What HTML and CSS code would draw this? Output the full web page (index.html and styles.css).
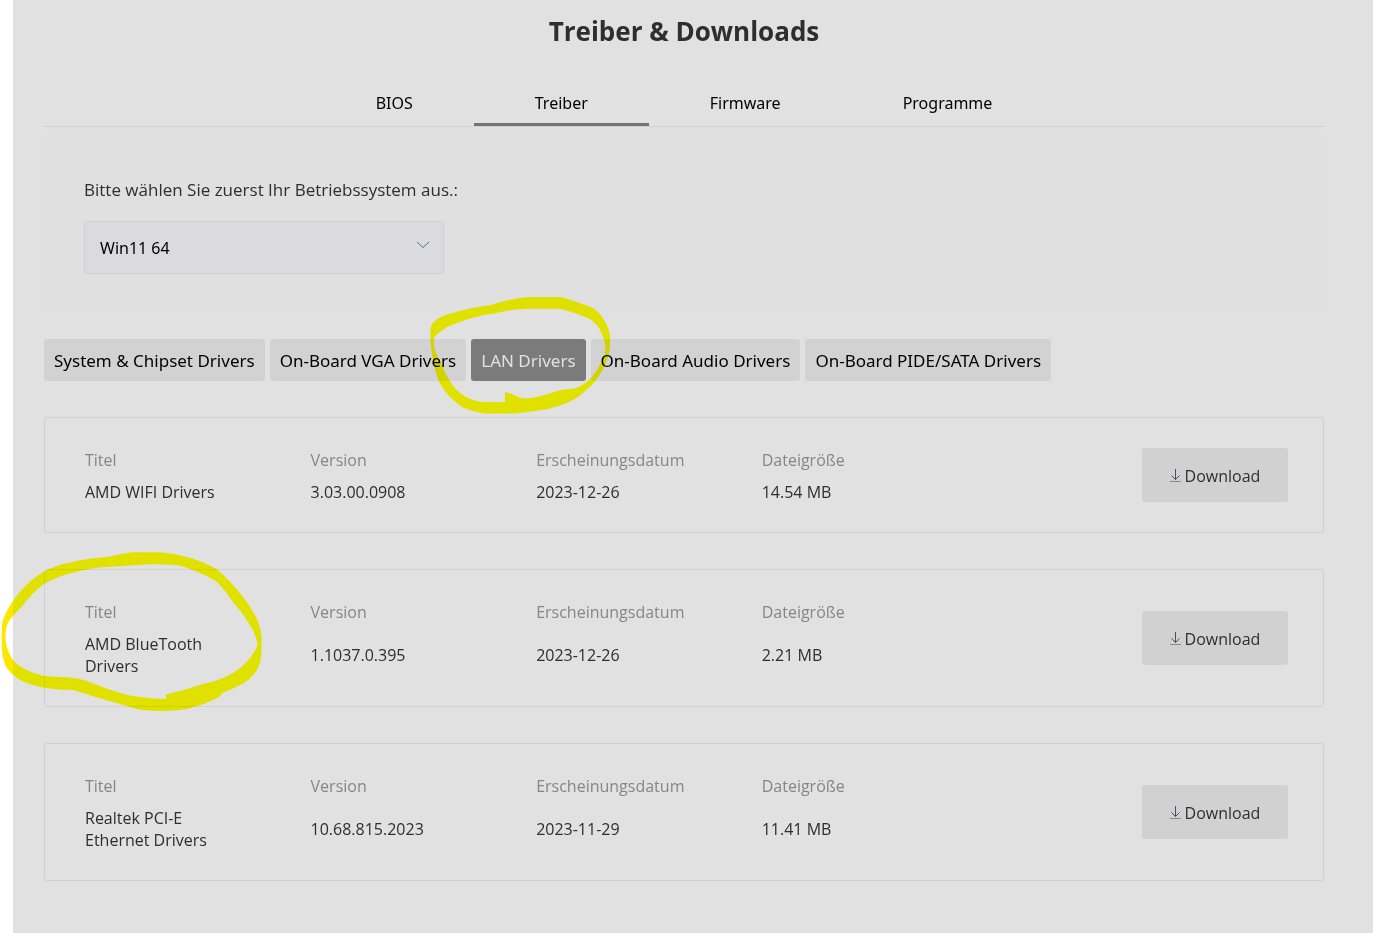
FILE: index.html
```html
<!DOCTYPE html>
<html lang="de">
	<head>
		<meta charset="UTF-8">
		<title>Treiber &amp; Downloads</title>
		<link rel="stylesheet" href="styles.css">
	</head>

	<body>
		<main class="page">
			<h1 class="title">Treiber &amp; Downloads</h1>

			<nav class="tabs">
				<a href="#bios">BIOS</a>
				<a href="#treiber" class="current">Treiber</a>
				<a href="#firmware">Firmware</a>
				<a href="#programme">Programme</a>
			</nav>

			<section class="os">
				<label for="os">Bitte wählen Sie zuerst Ihr Betriebssystem aus.:</label>
				<div class="select">
					<select id="os">
						<option>Win11 64</option>
					</select>
					<svg class="arrow" width="14" height="8" viewBox="0 0 14 8"><path d="M1 1l6 5.500 6-5.500" fill="none" stroke="#4f7090" stroke-width="1"/></svg>
				</div>
			</section>

			<div class="filter">
				<button type="button">System &amp; Chipset Drivers</button>
				<button type="button">On-Board VGA Drivers</button>
				<div class="marked">
					<button type="button" class="current">LAN Drivers</button>
					<svg class="ink ink-filter" width="192" height="126" viewBox="424 292 192 126">
						<path fill-rule="evenodd" d="M527 297H557Q562 297 567 299L590 307Q599 312 603 320Q608 328 609 336V345Q609 353 605 362Q602 371 595 380Q590 387 583 392Q577 398 570 401Q559 406 547 409Q530 412 513 413.500H483Q472 412 463 408Q456 404 450 398Q443 391 438 382Q435 374 433 365Q430 352 429.500 340V328Q431 322 438 318Q446 314 455 312Q472 307 490 305Q508 299 527 297Z
						M527 308.700H557Q562 309 567 311Q577 314 587 318Q594 322 598 328Q603 337 604.500 347Q605 353 602 359Q597 370 590 378Q582 386 572 389Q565 389 560 390L540 396Q532 398 524 398.500Q519 398 515 396Q509 393 504 392V402H480Q472 401 465 397Q458 393 453 387Q445 376 440 363Q435 354 433 347V338Q436 333 442 330Q447 326 453 324Q468 318 483 315Q492 314 500 312Q513 309 527 308.700Z"/>
					</svg>
				</div>
				<button type="button">On-Board Audio Drivers</button>
				<button type="button">On-Board PIDE/SATA Drivers</button>
			</div>

			<div class="list">
				<article class="card">
					<dl>
						<div><dt>Titel</dt><dd>AMD WIFI Drivers</dd></div>
						<div><dt>Version</dt><dd>3.03.00.0908</dd></div>
						<div><dt>Erscheinungsdatum</dt><dd>2023-12-26</dd></div>
						<div><dt>Dateigröße</dt><dd>14.54 MB</dd></div>
					</dl>
					<a class="download" href="#wifi"><svg width="11" height="13" viewBox="0 0 11 13"><path d="M5.500 0v10.500M1.500 6.500l4 4 4-4" fill="none" stroke="#554a58"/><path d="M0 12.500h11" stroke="#8c8c8c"/></svg>Download</a>
				</article>

				<article class="card">
					<dl>
						<div><dt>Titel</dt><dd>AMD BlueTooth Drivers</dd></div>
						<div><dt>Version</dt><dd>1.1037.0.395</dd></div>
						<div><dt>Erscheinungsdatum</dt><dd>2023-12-26</dd></div>
						<div><dt>Dateigröße</dt><dd>2.21 MB</dd></div>
					</dl>
					<a class="download" href="#bluetooth"><svg width="11" height="13" viewBox="0 0 11 13"><path d="M5.500 0v10.500M1.500 6.500l4 4 4-4" fill="none" stroke="#554a58"/><path d="M0 12.500h11" stroke="#8c8c8c"/></svg>Download</a>
					<svg class="ink ink-card" width="264" height="163" viewBox="0 550 264 163">
						<path fill-rule="evenodd" d="M132 552.300H160Q173 553 185 556.500Q203 561 218 570Q230 581 240 593Q250 605 257 619Q261 628 261.500 637V652Q261 662 257 670Q251 679 242 684Q233 689 223 692.500Q220 697 213 700Q200 706 187 709Q175 711 163 711Q153 711 143 710Q135 709 127 706L97 697.500Q84 693 73 690Q58 690 43 687.500Q30 685 20 680Q10 674 5 665Q2 656 1.700 647V627Q2 621 5 615Q11 602 20 592Q30 580 43 572Q56 565 70 562.500Q88 558 107 557Q120 554 132 552.300Z
						M147 564.300Q162 564 177 565Q186 567 193 570Q206 575 217 582Q226 591 233 602Q243 613 250 625Q256 634 257.700 645Q255 652 250 658Q243 667 233 673Q219 681 203 684Q185 690 166 694.500V699Q152 699 140 697Q128 696 117 692Q101 687 87 681Q79 678 70 677.500Q56 677 43 675.700Q34 674 27 670Q19 667 13 660Q7 651 5.500 640V633Q6 625 10 619.500Q15 613 21.500 607Q31 594 43 584.500Q56 577 70 573.500Q88 568 107 567Q127 566 147 564.300Z"/>
					</svg>
				</article>

				<article class="card">
					<dl>
						<div><dt>Titel</dt><dd>Realtek PCI-E Ethernet Drivers</dd></div>
						<div><dt>Version</dt><dd>10.68.815.2023</dd></div>
						<div><dt>Erscheinungsdatum</dt><dd>2023-11-29</dd></div>
						<div><dt>Dateigröße</dt><dd>11.41 MB</dd></div>
					</dl>
					<a class="download" href="#ethernet"><svg width="11" height="13" viewBox="0 0 11 13"><path d="M5.500 0v10.500M1.500 6.500l4 4 4-4" fill="none" stroke="#554a58"/><path d="M0 12.500h11" stroke="#8c8c8c"/></svg>Download</a>
				</article>
			</div>
		</main>
	</body>
</html>
```
FILE: styles.css
```css
*{
	margin: 0;
	padding: 0;
	box-sizing: border-box;
}

html{
	background: #ffffff;
}

body{
	font: 16px/22px "Open Sans", "Noto Sans", sans-serif;
	color: #2e2e2e;
}

a{
	color: inherit;
	text-decoration: none;
}

.page{
	min-height: 100vh;
	margin-left: 13px;
	padding: 12px 49px 52px 31px;
	background: #e1e1e1;
}

.title{
	font-size: 26px;
	line-height: 38px;
	font-weight: 700;
	text-align: center;
}

/* tabs */
.tabs{
	display: flex;
	justify-content: center;
	margin-top: 30px;
	border-bottom: 1px solid #cfcfcf;
	font-family: "Noto Sans", sans-serif;
	color: #000000;
}

.tabs a{
	padding: 12px 61px 9px;
	border-bottom: 3px solid transparent;
}

.tabs a.current{
	border-bottom-color: #747474;
}

/* operating system */
.os{
	margin-top: 5px;
	padding: 46px 40px 37px;
	background: #e0e0e0;
}

.os label{
	display: block;
	font-size: 17px;
	line-height: 24px;
}

.select{
	position: relative;
	width: 360px;
	margin-top: 19px;
}

.select select{
	display: block;
	width: 100%;
	height: 53px;
	padding: 0 15px;
	appearance: none;
	border: 1px solid #cfcfd1;
	border-radius: 3px;
	background: #dadadf;
	font: 16px "Noto Sans", sans-serif;
	color: #000000;
}

.arrow{
	position: absolute;
	right: 14px;
	top: 20px;
	pointer-events: none;
}

/* driver groups */
.filter{
	display: flex;
	gap: 5px;
	margin-top: 28px;
}

.filter button{
	height: 42px;
	padding: 0 10px;
	border: 0;
	border-radius: 3px;
	background: #d2d2d2;
	font: 17px "Noto Sans", sans-serif;
	color: #000000;
	white-space: nowrap;
}

.filter button.current{
	background: #7b7b7b;
	color: #e1e1e1;
}

.marked{
	position: relative;
}

/* highlighter */
.ink{
	position: absolute;
	fill: #ffe600;
	mix-blend-mode: darken;
	pointer-events: none;
}

.ink-filter{
	left: -46px;
	top: -47px;
}

.ink-card{
	left: -45px;
	top: -20px;
}

/* driver list */
.list{
	display: grid;
	gap: 36px;
	margin-top: 36px;
}

.card{
	position: relative;
	display: flex;
	align-items: center;
	justify-content: space-between;
	padding: 29px 35px 29px 40px;
	border: 1px solid #d0d0d0;
	border-radius: 3px;
}

.card dl{
	display: flex;
	width: 75%;
	padding-top: 2px;
}

.card dl div{
	display: flex;
	flex-direction: column;
	width: 25%;
	padding-right: 80px;
}

.card dt{
	margin-bottom: 10px;
	color: #868686;
}

.card dd{
	display: flex;
	flex: 1;
	align-items: center;
}

.download{
	display: flex;
	align-items: center;
	justify-content: center;
	gap: 4px;
	width: 146px;
	height: 54px;
	padding-top: 2px;
	border-radius: 3px;
	background: #d1d1d1;
}

.download svg{
	margin-bottom: 2px;
}
```
